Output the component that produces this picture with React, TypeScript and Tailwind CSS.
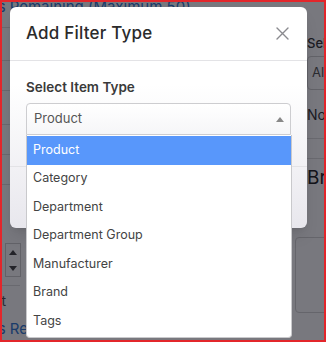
import React from 'react';

const ITEM_TYPES = ['Product', 'Category', 'Department', 'Department Group', 'Manufacturer', 'Brand', 'Tags'];

const font = { fontFamily: 'Inter, "Open Sans", "Noto Sans", sans-serif' };

const PageBehind: React.FC = () => (
    <div className="flex flex-col h-full bg-white">
        <div className="h-[12px] -ml-[44px] -mt-[4px] text-[15px] leading-[18px] text-[#2f78d2] whitespace-nowrap">
            Others Remaining (Maximum 50)
        </div>
        <div className="flex flex-1 min-h-0">
            <div className="w-[20px] -ml-[2px] flex flex-col">
                <div className="h-[18px] border-b border-[#dedede]" />
                <div className="h-[33px] border-b border-[#dedede]" />
                <div className="h-[30px] border-b border-[#dedede]" />
                <div className="h-[34px] border-b border-[#dedede]" />
                <div className="h-[30px] border-b border-[#dedede]" />
                <div className="h-[30px] border-b border-[#dedede]" />
                <div className="h-[58px]" />
                <div className="ml-[5px] w-[16px] h-[34px] border border-[#cfcfcf] flex flex-col items-center justify-center gap-[11px]">
                    <div className="w-0 h-0 border-x-[4px] border-x-transparent border-b-[5px] border-b-[#444]" />
                    <div className="w-0 h-0 border-x-[4px] border-x-transparent border-t-[5px] border-t-[#444]" />
                </div>
                <div className="h-[9px] border-b border-[#dedede]" />
                <div className="mt-[7px] -ml-[6px] text-[14px] leading-[16px] text-[#555]">st</div>
            </div>
            <div className="flex-1" />
            <div className="w-[40px] -mr-[23px] flex flex-col pt-[24px]">
                <div className="text-[13px] leading-[18px] text-[#333] font-medium">Select</div>
                <div className="mt-[4px] h-[34px] border border-[#cfcfcf] rounded-[4px] pl-[4px] flex items-center text-[13px] text-[#555]">All</div>
                <div className="mt-[16px] text-[14px] leading-[18px] text-[#333]">None</div>
                <div className="mt-[14px] border-b border-[#dedede]" />
                <div className="mt-[19px] border-b border-[#dedede]" />
                <div className="mt-[6px] text-[19px] leading-[26px] text-[#222]">Brand</div>
                <div className="mt-[46px] -ml-[12px] h-[76px] border border-[#d4d4d4] rounded-[4px]" />
            </div>
        </div>
        <div className="h-[20px] -ml-[44px] text-[15px] leading-[18px] text-[#2f78d2] whitespace-nowrap">
            Others Remaining (Maximum 50)
        </div>
    </div>
);

const CloseIcon: React.FC = () => (
    <svg width="13" height="13" viewBox="0 0 13 13" fill="none">
        <path d="M1 1L12 12M12 1L1 12" stroke="#8a8a8f" strokeWidth="1.4" strokeLinecap="round" />
    </svg>
);

export default function App() {
    return (
        <div className="relative w-[326px] h-[342px] overflow-hidden border-2 border-[#e3262b]" style={font}>
            <PageBehind />

            {/* backdrop */}
            <div className="absolute inset-0 bg-[#0a0a14]/55" />

            {/* modal */}
            <div className="absolute left-[8px] top-[5px] w-[297px] h-[221px] rounded-[6px] bg-gradient-to-b from-white from-35% to-[#e8e7ed] flex flex-col shadow-lg">
                <div className="h-[54px] border-b border-[#e3e3e6] flex items-center justify-between pl-[16px] pr-[18px]">
                    <h1 className="text-[17px] font-medium text-[#2b2b2b] tracking-[0.2px]">Add Filter Type</h1>
                    <CloseIcon />
                </div>
                <div className="px-[16px] pt-[16px] pb-[31px] border-b border-[#e3e3e6]">
                    <div className="text-[13.5px] leading-[20px] font-semibold text-[#3a3a3a]">Select Item Type</div>
                    <div className="mt-[6px] h-[32px] rounded-t-[4px] border border-[#cdcdd0] bg-gradient-to-b from-white to-[#f6f6f8] flex items-center justify-between pl-[7px] pr-[6px]">
                        <span className="text-[13px] text-[#555]">Product</span>
                        <span className="w-0 h-0 border-x-[4px] border-x-transparent border-b-[5px] border-b-[#888]" />
                    </div>
                </div>
                <div className="flex-1" />
            </div>

            {/* open select dropdown */}
            <div className="absolute left-[24px] top-[133px] w-[266px] bg-white border border-t-0 border-[#c9c9cc] rounded-b-[4px] flex flex-col py-px">
                {ITEM_TYPES.map((item, i) => (
                    <div
                        key={item}
                        className={
                            i === 0
                                ? 'h-[28.5px] flex items-center px-[6px] text-[12.5px] bg-[#5897fb] text-white'
                                : 'h-[28.5px] flex items-center px-[6px] text-[12.5px] text-[#444]'
                        }
                    >
                        {item}
                    </div>
                ))}
            </div>
        </div>
    );
}
